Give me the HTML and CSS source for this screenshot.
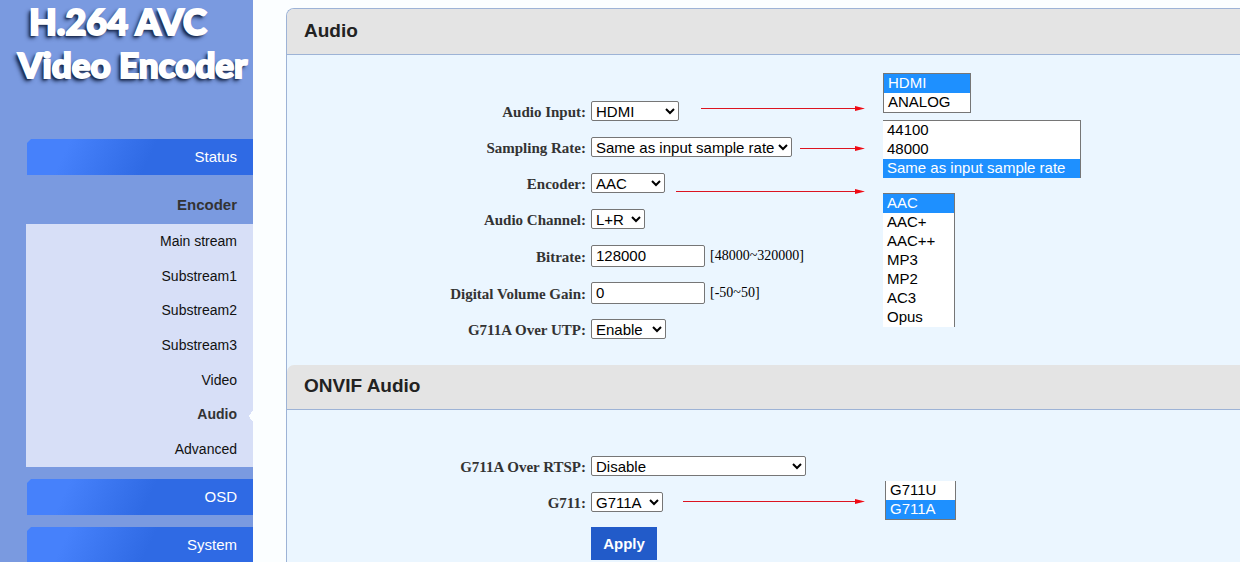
FILE: index.html
```html
<!DOCTYPE html>
<html lang="en">
<head>
<meta charset="utf-8">
<title>H.264 AVC Video Encoder</title>
<link rel="stylesheet" href="styles.css">
</head>
<body>
<div class="page">
  <aside class="sidebar">
    <div class="logo"><span class="logo-top">H.264 AVC</span><span>Video Encoder</span></div>
    <nav class="menu">
      <a class="menu-item" href="#status">Status</a>
      <a class="menu-item menu-item-open" href="#encoder">Encoder</a>
      <div class="submenu">
        <a href="#main">Main stream</a>
        <a href="#sub1">Substream1</a>
        <a href="#sub2">Substream2</a>
        <a href="#sub3">Substream3</a>
        <a href="#video">Video</a>
        <a class="current" href="#audio">Audio</a>
        <a href="#advanced">Advanced</a>
      </div>
      <a class="menu-item" href="#osd">OSD</a>
      <a class="menu-item" href="#system">System</a>
    </nav>
  </aside>

  <main class="panel">
    <h2 class="panel-title">Audio</h2>
    <section class="panel-body">
      <form class="form">
        <div class="row"><label for="input">Audio Input:</label><select id="input" class="w-input"><option>HDMI</option><option>ANALOG</option></select></div>
        <div class="row"><label for="rate">Sampling Rate:</label><select id="rate" class="w-rate"><option>44100</option><option>48000</option><option selected>Same as input sample rate</option></select></div>
        <div class="row"><label for="encoder">Encoder:</label><select id="encoder" class="w-encoder"><option>AAC</option><option>AAC+</option><option>AAC++</option><option>MP3</option><option>MP2</option><option>AC3</option><option>Opus</option></select></div>
        <div class="row"><label for="channel">Audio Channel:</label><select id="channel" class="w-channel"><option>L+R</option></select></div>
        <div class="row row-text"><label for="bitrate">Bitrate:</label><input id="bitrate" type="text" value="128000"><span class="hint">[48000~320000]</span></div>
        <div class="row row-text"><label for="gain">Digital Volume Gain:</label><input id="gain" type="text" value="0"><span class="hint">[-50~50]</span></div>
        <div class="row"><label for="utp">G711A Over UTP:</label><select id="utp" class="w-utp"><option>Enable</option></select></div>
      </form>
      <div class="lists">
        <ul class="list list-input" role="listbox" aria-label="Audio Input">
          <li class="selected" role="option" aria-selected="true">HDMI</li>
          <li role="option">ANALOG</li>
        </ul>
        <ul class="list list-rate" role="listbox" aria-label="Sampling Rate">
          <li role="option">44100</li>
          <li role="option">48000</li>
          <li class="selected" role="option" aria-selected="true">Same as input sample rate</li>
        </ul>
        <ul class="list list-encoder" role="listbox" aria-label="Encoder">
          <li class="selected" role="option" aria-selected="true">AAC</li>
          <li role="option">AAC+</li>
          <li role="option">AAC++</li>
          <li role="option">MP3</li>
          <li role="option">MP2</li>
          <li role="option">AC3</li>
          <li role="option">Opus</li>
        </ul>
      </div>
      <svg class="arrows" width="596" height="160" viewBox="0 0 596 160" aria-hidden="true">
        <path class="shaft" d="M414 53.500H570M513 93.500H570M389 136.500H570"/>
        <path class="head" d="M568 51l10 2.500-10 2.500zM568 91l10 2.500-10 2.500zM568 134l10 2.500-10 2.500z"/>
      </svg>
    </section>

    <h2 class="panel-title panel-title-next">ONVIF Audio</h2>
    <section class="panel-body">
      <form class="form">
        <div class="row"><label for="rtsp">G711A Over RTSP:</label><select id="rtsp" class="w-rtsp"><option>Disable</option></select></div>
        <div class="row"><label for="g711">G711:</label><select id="g711" class="w-g711"><option>G711U</option><option selected>G711A</option></select></div>
        <button class="apply" type="button">Apply</button>
      </form>
      <div class="lists lists-onvif">
        <ul class="list list-g711" role="listbox" aria-label="G711">
          <li role="option">G711U</li>
          <li class="selected" role="option" aria-selected="true">G711A</li>
        </ul>
      </div>
      <svg class="arrows" width="596" height="110" viewBox="0 0 596 110" aria-hidden="true">
        <path class="shaft" d="M396 91.500H570"/>
        <path class="head" d="M568 89l10 2.500-10 2.500z"/>
      </svg>
    </section>
  </main>
</div>
</body>
</html>
```

FILE: styles.css
```css
* { box-sizing: border-box; }

body {
  margin: 0;
  overflow: hidden;
  background: #fbfeff;
  color: #000;
  font-family: "Liberation Sans", Arial, sans-serif;
  font-size: 15px;
}

.page {
  display: flex;
  gap: 33px;
  height: 100vh;
}

/* Sidebar */
.sidebar {
  flex: 0 0 253px;
  background: #7a9ae0;
}

.logo {
  display: flex;
  flex-direction: column;
  height: 139px;
  padding-left: 18px;
  color: #fff;
  font-family: Lato, "Open Sans", sans-serif;
  font-size: 35px;
  font-weight: 900;
  line-height: 43px;
  white-space: nowrap;
  -webkit-text-stroke: 2px #fff;
  text-shadow: -2px 2px 2px #1c2c50, -3px 3px 4px #1c2c50;
}

.logo-top {
  padding-left: 11px;
  font-size: 36px;
}

.menu {
  display: flex;
  flex-direction: column;
  gap: 12px;
  padding-left: 27px;
}

.menu a {
  display: flex;
  align-items: center;
  justify-content: flex-end;
  padding-right: 16px;
  text-decoration: none;
}

.menu-item {
  height: 36px;
  background: linear-gradient(115deg, #4681fb 18%, #2f6ae4 54%);
  clip-path: polygon(4px 0, 100% 0, 100% 100%, 0 100%, 0 4px);
  color: #fff;
}

.menu .menu-item { padding-bottom: 1px; }

.menu-item-open {
  background: none;
  color: #333;
  font-weight: bold;
}

.submenu {
  display: grid;
  grid-auto-rows: 1fr;
  height: 243px;
  margin: -11px 0 0 -1px;
  background: #d7dff7;
  font-size: 14px;
}

.submenu a {
  padding-bottom: 1px;
  color: #111;
}

.submenu .current {
  background: conic-gradient(from 45deg at 0 50%, #fbfeff 0 90deg, transparent 0) right / 5px 10px no-repeat;
  background: linear-gradient(135deg, transparent 50%, #fbfeff 0) right 0 top 13px / 5px 5px no-repeat,
    linear-gradient(45deg, transparent 50%, #fbfeff 0) right 0 top 18px / 5px 5px no-repeat;
  color: #333;
  font-weight: bold;
}

/* Panel */
.panel {
  flex: 1;
  min-width: 0;
  height: max-content;
  margin-top: 8px;
  border: solid #9db3d6;
  border-width: 1px 0 0 1px;
  border-radius: 8px 0 0 0;
  background: #ebf6ff;
}

.panel-title {
  height: 46px;
  margin: 0;
  padding-left: 17px;
  border-bottom: 1px solid #9db3d6;
  border-radius: 7px 0 0 0;
  background: #e4e4e4;
  color: #222;
  font-size: 19px;
  line-height: 44px;
}

.panel-title-next {
  height: 45px;
  line-height: 42px;
}

.panel-body {
  position: relative;
  display: flex;
}

.form {
  flex: 0 0 596px;
  padding: 38px 0 18px;
}

.row {
  display: grid;
  grid-template-columns: 299px auto auto;
  justify-content: start;
  align-items: center;
  gap: 5px;
  height: 36px;
}

.row-text { height: 37px; }

.row label {
  padding-top: 3px;
  color: #333;
  font-family: "Liberation Serif", "Times New Roman", serif;
  font-weight: bold;
  text-align: right;
}

select, input {
  height: 20px;
  padding: 0;
  border: 1px solid #767676;
  border-radius: 2px;
  background-color: #fff;
  color: #000;
  font-family: inherit;
  font-size: 15px;
}

input {
  width: 114px;
  height: 22px;
  padding: 0 4px;
}

.w-input { width: 88px; }
.w-rate { width: 201px; }
.w-encoder { width: 74px; }
.w-channel { width: 54px; }
.w-utp { width: 75px; }
.w-rtsp { width: 215px; }
.w-g711 { width: 72px; }

.hint {
  font-family: "Liberation Serif", "Times New Roman", serif;
  font-size: 14px;
}

.apply {
  width: 66px;
  height: 33px;
  margin: 7px 0 0 304px;
  padding: 0 0 1px;
  border: 0;
  background: #225bc9;
  color: #fff;
  font-family: inherit;
  font-size: 15px;
  font-weight: bold;
}

/* Open option lists */
.lists {
  display: flex;
  flex-direction: column;
  align-items: flex-start;
  padding-top: 18px;
}

.list {
  margin: 0;
  padding: 0;
  border: 0 solid #767676;
  background: #fff;
  line-height: 17px;
  list-style: none;
}

.list li { padding: 0 0 2px 4px; }

.list .selected {
  background: #1e90ff;
  color: #fff;
}

.list-input {
  width: 88px;
  border-width: 1px;
}

.list-rate {
  width: 198px;
  margin-top: 7px;
  border-width: 1px 1px 0 0;
}

.list-encoder {
  width: 72px;
  margin-top: 15px;
  border-width: 1px 1px 0 0;
}

.lists-onvif {
  padding: 71px 0 0 2px;
}

.list-g711 {
  width: 71px;
  border-width: 0 1px 1px;
}

/* Arrows laid over the form, from a field to its option list */
.arrows {
  position: absolute;
  top: 0;
  left: 0;
  pointer-events: none;
}

.shaft {
  fill: none;
  stroke: #dc1420;
}

.head { fill: #f00a14; }
```
